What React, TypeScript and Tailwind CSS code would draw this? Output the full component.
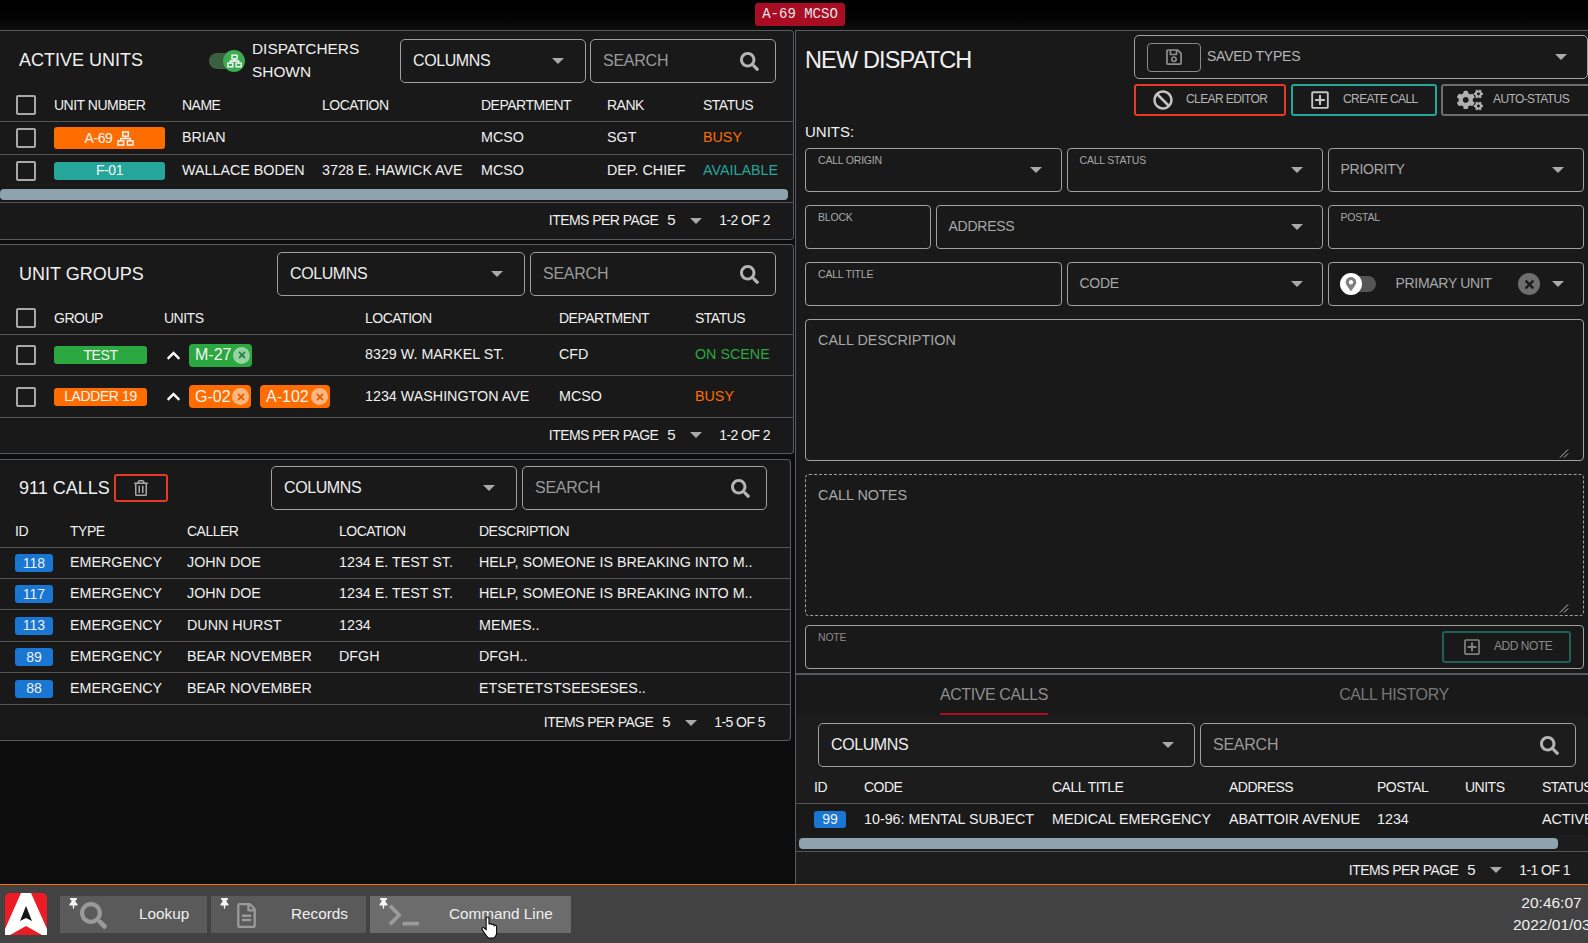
import React from "react";
import {
  FaSearch, FaRegTrashAlt, FaRegSave, FaBan, FaRegPlusSquare, FaCogs,
  FaMapMarkerAlt, FaThumbtack, FaRegFileAlt, FaTerminal, FaTimes, FaChevronUp,
} from "react-icons/fa";

function Arrow() {
  return <span className="block w-0 h-0 shrink-0 border-x-[6px] border-x-transparent border-t-[6px] border-t-[#aaaaaa]" />;
}

function Network({ w, h }: { w: number; h: number }) {
  return (
    <svg width={w} height={h} viewBox="0 0 18 16" fill="none" stroke="currentColor" strokeWidth="1.6" className="shrink-0">
      <rect x="6" y="1" width="6" height="4.5" />
      <rect x="1" y="10.5" width="6" height="4.5" />
      <rect x="11" y="10.5" width="6" height="4.5" />
      <path d="M9 5.5V8 M4 10.5V8H14V10.5" />
    </svg>
  );
}

function ColumnsBox({ w, pr = "pr-[21px]" }: { w: string; pr?: string }) {
  return (
    <div className={`${w} h-[44px] shrink-0 flex items-center justify-between border border-[#a0a0a0] rounded-[5px] pl-[12px] ${pr} text-[16px] tracking-[-0.4px] text-[#eeeeee]`}>
      <span>COLUMNS</span>
      <Arrow />
    </div>
  );
}

function SearchBox({ w }: { w: string }) {
  return (
    <div className={`${w} h-[44px] shrink-0 flex items-center justify-between border border-[#a0a0a0] rounded-[5px] pl-[12px] pr-[16px] text-[16px] tracking-[-0.25px] text-[#9a9a9a]`}>
      <span className="-mt-[1px]">SEARCH</span>
      <FaSearch size={19} className="text-[#b5b5b5]" />
    </div>
  );
}

function Check() {
  return <span className="block w-[20px] h-[20px] border-2 border-[#a8a8a8] rounded-[2px]" />;
}

function Pager({ range, pr }: { range: string; pr: string }) {
  return (
    <div className={`flex items-center justify-end text-[14px] tracking-[-0.55px] text-[#f0f0f0] ${pr}`}>
      <span>ITEMS PER PAGE</span>
      <span className="ml-[9px] text-[15px]">5</span>
      <span className="ml-[15px] mr-[17px]"><Arrow /></span>
      <span>{range}</span>
    </div>
  );
}

function Badge({ color, w, h, children }: { color: string; w: string; h: string; children: React.ReactNode }) {
  return (
    <span className={`${color} ${w} ${h} rounded-[3px] flex items-center justify-center gap-[5px] text-[14px] tracking-[-0.4px] text-[#f5f5f5]`}>
      {children}
    </span>
  );
}

function Chip({ label, color, x, w }: { label: string; color: string; x: string; w: string }) {
  return (
    <span className={`${color} ${w} h-[23px] rounded-[4px] flex items-center justify-between pl-[6px] pr-[2px] text-[16px] text-[#f5f5f5]`}>
      <span>{label}</span>
      <span className="w-[17px] h-[17px] rounded-full bg-[#ffffff80] flex items-center justify-center">
        <FaTimes size={10} className={x} />
      </span>
    </span>
  );
}

function Field({ label, big, arrow }: { label: string; big?: boolean; arrow?: boolean }) {
  return (
    <div className="h-[44px] flex items-center justify-between border border-[#a0a0a0] rounded-[4px] pl-[12px] pr-[19px] text-[#a8a8a8]">
      {big ? <span className="text-[14px] tracking-[-0.25px] -mt-[1px]">{label}</span> : <span className="self-start mt-[5px] text-[10.5px] tracking-[-0.2px] leading-[12px]">{label}</span>}
      {arrow && <Arrow />}
    </div>
  );
}

function ResizeHandle() {
  return (
    <svg width="10" height="10" viewBox="0 0 10 10" className="absolute right-[14px] bottom-[2px]">
      <path d="M1 9.5 L9 1.5 M5 9.5 L9 5.5" stroke="#bbbbbb" strokeWidth="1" />
    </svg>
  );
}

function Logo() {
  return (
    <svg width="42" height="42" viewBox="0 0 42 42" className="shrink-0 ml-[5px]">
      <rect width="42" height="42" rx="5" fill="#ed1c24" />
      <path d="M16 0 L26 0 L42 36 L42 42 L37 42 L21 33 L5 42 L0 42 L0 36 Z" fill="#ffffff" />
      <path d="M21 13 L27 28 L21 25 L15 28 Z" fill="#151515" />
    </svg>
  );
}

function TaskButton({ w, bg, iconW, icon, label }: { w: string; bg: string; iconW: string; icon: React.ReactNode; label: string }) {
  return (
    <div className={`${w} ${bg} h-[37px] flex items-center pl-[8px] shrink-0 text-[15.3px] text-[#f0f0f0]`}>
      <FaThumbtack size={11} className="self-start mt-[2px] text-[#f5f5f5] shrink-0" />
      <span className={`${iconW} flex items-center shrink-0 text-[#9a9a9a]`}>{icon}</span>
      <span>{label}</span>
    </div>
  );
}

const units = [
  { n: "A-69", name: "BRIAN", loc: "", dept: "MCSO", rank: "SGT", status: "BUSY", c: "text-[#ff6d00]" },
  { n: "F-01", name: "WALLACE BODEN", loc: "3728 E. HAWICK AVE", dept: "MCSO", rank: "DEP. CHIEF", status: "AVAILABLE", c: "text-[#26a69a]" },
];

const calls = [
  { id: "118", caller: "JOHN DOE", loc: "1234 E. TEST ST.", d: "HELP, SOMEONE IS BREAKING INTO M..", h: "h-[31px]" },
  { id: "117", caller: "JOHN DOE", loc: "1234 E. TEST ST.", d: "HELP, SOMEONE IS BREAKING INTO M..", h: "h-[31px]" },
  { id: "113", caller: "DUNN HURST", loc: "1234", d: "MEMES..", h: "h-[32px]" },
  { id: "89", caller: "BEAR NOVEMBER", loc: "DFGH", d: "DFGH..", h: "h-[31px]" },
  { id: "88", caller: "BEAR NOVEMBER", loc: "", d: "ETSETETSTSEESESES..", h: "h-[32px]" },
];

const panel = "bg-[#191919] border border-l-0 border-[#565b60] rounded-r-[4px] whitespace-nowrap";
const line = "border-b border-[#555555]";
const head = "text-[14px] tracking-[-0.5px]";
const unitCols = "grid grid-cols-[38px_128px_140px_159px_126px_1fr] items-center pl-[16px]";
const groupCols = "grid grid-cols-[38px_110px_201px_194px_1fr] items-center pl-[16px]";
const callCols = "grid grid-cols-[55px_117px_152px_140px_1fr] items-center pl-[15px]";
const activeCols = "grid grid-cols-[50px_188px_177px_148px_88px_77px_1fr] items-center pl-[18px]";

export default function App() {
  return (
    <div className="w-[1588px] h-[943px] overflow-hidden flex flex-col relative bg-[#0c0c0c] font-['Liberation_Sans',Arial,sans-serif] text-[#f0f0f0]">
      {/* top bar */}
      <div className="h-[30px] shrink-0 flex justify-center pt-[3px] bg-gradient-to-b from-[#000000] to-[#101010]">
        <span className="h-[23px] w-[90px] ml-[12px] rounded-[3px] bg-[#a90d24] flex items-center justify-center font-['Liberation_Mono',monospace] text-[14px] text-[#e4e4e4]">A-69 MCSO</span>
      </div>

      <div className="h-[854px] shrink-0 flex">
        {/* left column */}
        <div className="w-[795px] shrink-0">
          <section className={`${panel} w-[794px] h-[210px]`}>
            <div className="flex items-center pt-[8px]">
              <h2 className="w-[209px] shrink-0 pl-[19px] text-[18px] leading-[44px] -mt-[2px] font-normal">ACTIVE UNITS</h2>
              <div className="w-[43px] shrink-0 flex items-center relative h-[22px]">
                <span className="block w-[30px] h-[16px] rounded-full bg-[#3b5f41]" />
                <span className="absolute left-[14px] top-0 w-[22px] h-[22px] rounded-full bg-[#3dac52] flex items-center justify-center text-white">
                  <Network w={15} h={14} />
                </span>
              </div>
              <div className="w-[148px] shrink-0 whitespace-normal text-[15.4px] leading-[22.5px] -mt-[1px]">DISPATCHERS<br />SHOWN</div>
              <ColumnsBox w="w-[186px]" />
              <div className="w-[4px] shrink-0" />
              <SearchBox w="w-[186px]" />
            </div>
            <div className={`${unitCols} ${line} h-[39px] pt-[6px] ${head}`}>
              <Check />
              <span>UNIT NUMBER</span><span>NAME</span><span>LOCATION</span><span>DEPARTMENT</span>
              <span className="flex"><span className="w-[96px]">RANK</span><span>STATUS</span></span>
            </div>
            {units.map((u, i) => (
              <div key={u.n} className={`${unitCols} ${i === 0 ? `${line} h-[33px]` : "h-[31px]"} text-[14.3px]`}>
                <Check />
                {i === 0 ? (
                  <Badge color="bg-[#ff6d00]" w="w-[111px]" h="h-[22px]">{u.n} <Network w={17} h={15} /></Badge>
                ) : (
                  <Badge color="bg-[#26a69a]" w="w-[111px]" h="h-[18px]">{u.n}</Badge>
                )}
                <span>{u.name}</span><span>{u.loc}</span><span>{u.dept}</span>
                <span className="flex"><span className="w-[96px]">{u.rank}</span><span className={u.c}>{u.status}</span></span>
              </div>
            ))}
            <div className={`${line} h-[17px] pt-[3px]`}>
              <div className="w-[788px] h-[11px] rounded-[4px] bg-[#8fa3ae]" />
            </div>
            <div className="h-[35px] flex items-center justify-end"><Pager range="1-2 OF 2" pr="pr-[23px]" /></div>
          </section>

          <section className={`${panel} w-[794px] h-[210px] mt-[4px]`}>
            <div className="flex items-center pt-[7px]">
              <h2 className="w-[277px] shrink-0 pl-[19px] text-[18px] font-normal">UNIT GROUPS</h2>
              <ColumnsBox w="w-[248px]" />
              <div className="w-[5px] shrink-0" />
              <SearchBox w="w-[246px]" />
            </div>
            <div className={`${groupCols} ${line} h-[39px] pt-[6px] ${head}`}>
              <Check /><span>GROUP</span><span>UNITS</span><span>LOCATION</span>
              <span className="flex"><span className="w-[136px]">DEPARTMENT</span><span>STATUS</span></span>
            </div>
            <div className={`${groupCols} ${line} h-[41px] text-[14.3px]`}>
              <Check />
              <Badge color="bg-[#2ba840]" w="w-[93px]" h="h-[18px]">TEST</Badge>
              <div className="flex items-center">
                <span className="w-[25px] pl-[2px]"><FaChevronUp size={15} className="text-white" /></span>
                <Chip label="M-27" color="bg-[#2ba840]" x="text-[#2f7d45]" w="w-[63px]" />
              </div>
              <span>8329 W. MARKEL ST.</span>
              <span className="flex"><span className="w-[136px]">CFD</span><span className="text-[#2ba840]">ON SCENE</span></span>
            </div>
            <div className={`${groupCols} ${line} h-[42px] text-[14.3px]`}>
              <Check />
              <Badge color="bg-[#ff6d00]" w="w-[93px]" h="h-[18px]">LADDER 19</Badge>
              <div className="flex items-center">
                <span className="w-[25px] pl-[2px]"><FaChevronUp size={15} className="text-white" /></span>
                <Chip label="G-02" color="bg-[#ff6d00]" x="text-[#e06000]" w="w-[62px]" />
                <span className="w-[9px]" />
                <Chip label="A-102" color="bg-[#ff6d00]" x="text-[#e06000]" w="w-[70px]" />
              </div>
              <span>1234 WASHINGTON AVE</span>
              <span className="flex"><span className="w-[136px]">MCSO</span><span className="text-[#ff6d00]">BUSY</span></span>
            </div>
            <div className="h-[34px] flex items-center justify-end"><Pager range="1-2 OF 2" pr="pr-[23px]" /></div>
          </section>

          <section className={`${panel} w-[791px] h-[282px] mt-[5px]`}>
            <div className="flex items-center pt-[6px]">
              <h2 className="w-[114px] shrink-0 pl-[19px] text-[18px] font-normal">911 CALLS</h2>
              <div className="w-[54px] h-[28px] shrink-0 border-2 border-[#e53a25] rounded-[3px] flex items-center justify-center mr-[103px]">
                <FaRegTrashAlt size={16} className="text-[#a8a8a8]" />
              </div>
              <ColumnsBox w="w-[246px]" />
              <div className="w-[5px] shrink-0" />
              <SearchBox w="w-[245px]" />
            </div>
            <div className={`${callCols} ${line} h-[38px] pt-[6px] ${head}`}>
              <span>ID</span><span>TYPE</span><span>CALLER</span><span>LOCATION</span><span>DESCRIPTION</span>
            </div>
            {calls.map((c) => (
              <div key={c.id} className={`${callCols} ${line} ${c.h} text-[14.3px]`}>
                <span className="w-[38px] h-[18px] rounded-[3px] bg-[#1976d2] flex items-center justify-center text-[14px]">{c.id}</span>
                <span>EMERGENCY</span><span>{c.caller}</span><span>{c.loc}</span><span>{c.d}</span>
              </div>
            ))}
            <div className="h-[35px] flex items-center justify-end"><Pager range="1-5 OF 5" pr="pr-[25px]" /></div>
          </section>
        </div>

        {/* right column */}
        <div className="w-[793px] shrink-0 overflow-hidden bg-[#191919] border-l border-t border-[#565b60] whitespace-nowrap">
          <div className="flex pt-[4px] pl-[9px]">
            <h1 className="w-[329px] shrink-0 text-[23.5px] tracking-[-0.85px] font-normal leading-[50px]">NEW DISPATCH</h1>
            <div className="w-[454px] shrink-0">
              <div className="h-[44px] flex items-center border border-[#a0a0a0] rounded-[5px] pl-[12px] pr-[20px] text-[14px] tracking-[-0.25px] text-[#b5b5b5]">
                <span className="w-[54px] h-[29px] border border-[#8a8a8a] rounded-[4px] flex items-center justify-center">
                  <FaRegSave size={18} className="text-[#8f8f8f]" />
                </span>
                <span className="ml-[6px] flex-1 -mt-[2px]">SAVED TYPES</span>
                <Arrow />
              </div>
              <div className="flex mt-[5px] text-[12px] tracking-[-0.6px] text-[#b5b5b5]">
                <div className="w-[152px] h-[32px] border-2 border-[#e53a25] rounded-[3px] flex items-center pl-[17px] shrink-0">
                  <FaBan size={20} className="text-[#c4c4c4]" /><span className="ml-[13px] -mt-[2px]">CLEAR EDITOR</span>
                </div>
                <div className="w-[146px] h-[32px] ml-[5px] border-2 border-[#26a69a] rounded-[3px] flex items-center pl-[17px] shrink-0">
                  <FaRegPlusSquare size={20} className="text-[#c4c4c4]" /><span className="ml-[13px] -mt-[2px]">CREATE CALL</span>
                </div>
                <div className="w-[150px] h-[32px] ml-[4px] border-2 border-[#6e6e6e] rounded-[3px] flex items-center pl-[14px] shrink-0">
                  <FaCogs size={26} className="text-[#b0b0b0]" /><span className="ml-[10px] -mt-[2px]">AUTO-STATUS</span>
                </div>
              </div>
            </div>
          </div>

          <div className="pl-[9px] pr-[4px]">
            <div className="h-[32px] flex items-center text-[15px]">UNITS:</div>
            <div className="grid grid-cols-[256.5px_256px_1fr] gap-x-[5px]">
              <Field label="CALL ORIGIN" arrow />
              <Field label="CALL STATUS" arrow />
              <Field label="PRIORITY" big arrow />
            </div>
            <div className="grid grid-cols-[125.5px_1fr_256.5px] gap-x-[5px] mt-[13px]">
              <Field label="BLOCK" />
              <Field label="ADDRESS" big arrow />
              <Field label="POSTAL" />
            </div>
            <div className="grid grid-cols-[256.5px_256px_1fr] gap-x-[5px] mt-[13px]">
              <Field label="CALL TITLE" />
              <Field label="CODE" big arrow />
              <div className="h-[44px] flex items-center border border-[#a0a0a0] rounded-[4px] pl-[11px] pr-[19px] text-[14px] tracking-[-0.3px] text-[#a8a8a8]">
                <div className="w-[36px] h-[22px] relative flex items-center shrink-0">
                  <span className="block w-[36px] h-[16px] rounded-full bg-[#555555]" />
                  <span className="absolute left-0 top-0 w-[22px] h-[22px] rounded-full bg-white flex items-center justify-center">
                    <FaMapMarkerAlt size={14} className="text-[#808080]" />
                  </span>
                </div>
                <span className="ml-[20px] flex-1 -mt-[1px]">PRIMARY UNIT</span>
                <span className="w-[22px] h-[22px] rounded-full bg-[#6e6e6e] flex items-center justify-center mr-[12px]">
                  <FaTimes size={13} className="text-[#1c1c1c]" />
                </span>
                <Arrow />
              </div>
            </div>
            <div className="relative h-[142px] mt-[13px] border border-[#a0a0a0] rounded-[4px] pl-[12px] pt-[10px] text-[14.4px] text-[#a8a8a8]">
              CALL DESCRIPTION
              <ResizeHandle />
            </div>
            <div className="relative h-[142px] mt-[13px] border border-dashed border-[#a0a0a0] rounded-[4px] pl-[12px] pt-[4px] text-[14.4px] text-[#a8a8a8]">
              <div className="mt-[6px]">CALL NOTES</div>
              <ResizeHandle />
            </div>
            <div className="h-[44px] mt-[9px] flex justify-between items-center border border-[#a0a0a0] rounded-[4px] pl-[12px] pr-[12px] text-[#8a8a8a]">
              <span className="self-start mt-[5px] text-[10.5px] tracking-[-0.2px] leading-[12px]">NOTE</span>
              <div className="w-[129px] h-[32px] border-2 border-[#1f5f58] rounded-[3px] flex items-center pl-[19px] text-[12px] tracking-[-0.45px] text-[#8a8a8a]">
                <FaRegPlusSquare size={18} className="text-[#808080]" /><span className="ml-[13px] -mt-[2px]">ADD NOTE</span>
              </div>
            </div>
          </div>

          <div className="mt-[4px] border-t-2 border-[#565b60] h-[43px] grid grid-cols-2">
            <div className="flex justify-center"><span className="h-[40px] pt-[2px] flex items-center border-b-2 border-[#b00d24] text-[16px] tracking-[-0.4px] text-[#8e8e8e]">ACTIVE CALLS</span></div>
            <div className="flex justify-center pl-[8px]"><span className="h-[40px] flex items-center text-[16px] tracking-[-0.4px] text-[#777777]">CALL HISTORY</span></div>
          </div>

          <div className="bg-[#1c1c1c] h-[168px]">
            <div className="flex gap-[5px] pt-[7px] pl-[22px]">
              <ColumnsBox w="w-[377px]" pr="pr-[20px]" />
              <SearchBox w="w-[376px]" />
            </div>
            <div className={`${activeCols} ${line} h-[37px] pt-[5px] ${head}`}>
              <span>ID</span><span>CODE</span><span>CALL TITLE</span><span>ADDRESS</span><span>POSTAL</span><span>UNITS</span><span>STATUS</span>
            </div>
            <div className={`${activeCols} h-[31px] bg-[#191919] text-[14.3px]`}>
              <span className="w-[32px] h-[17px] rounded-[3px] bg-[#1976d2] flex items-center justify-center text-[14px]">99</span>
              <span>10-96: MENTAL SUBJECT</span><span>MEDICAL EMERGENCY</span><span>ABATTOIR AVENUE</span><span>1234</span><span></span><span>ACTIVE</span>
            </div>
            <div className={`${line} h-[17px] pt-[3px] pl-[3px]`}>
              <div className="w-[759px] h-[11px] rounded-[4px] bg-[#8fa3ae]" />
            </div>
            <div className="h-[32px] pt-[4px] flex items-center justify-end"><Pager range="1-1 OF 1" pr="pr-[18px]" /></div>
          </div>
        </div>
      </div>

      {/* taskbar */}
      <div className="flex-1 border-t border-[#ff6d00] bg-[#424242] flex items-center">
        <Logo />
        <div className="ml-[13px] flex gap-[4px]">
          <TaskButton w="w-[147px]" bg="bg-[#5a5a5a]" iconW="w-[60px]" icon={<FaSearch size={27} className="ml-[1px] mt-[2px]" />} label="Lookup" />
          <TaskButton w="w-[155px]" bg="bg-[#5a5a5a]" iconW="w-[61px]" icon={<FaRegFileAlt size={25} className="ml-[4px] mt-[2px]" />} label="Records" />
          <TaskButton w="w-[201px]" bg="bg-[#6c6c6c]" iconW="w-[60px]" icon={<FaTerminal size={30} className="mt-[2px]" />} label="Command Line" />
        </div>
        <div className="ml-auto -mr-[2px] w-[77px] text-center text-[15.5px] leading-[22.5px] text-[#f0f0f0] shrink-0">20:46:07<br />2022/01/03</div>
      </div>

      {/* mouse pointer */}
      <svg width="17" height="23" viewBox="0 0 16 22" className="absolute left-[481px] top-[916px]">
        <path d="M5 1.5c1-1 2.5-.5 2.5 1V8c.5-1 2.5-1 2.5.5c.5-1 2.5-.7 2.5.7c.6-.8 2.3-.4 2.3 1V16c0 2-1.5 4.5-3 5H7c-1-.5-2-2-3-3.5L1 13c-.8-1.2.8-2.6 2-1.5L4.8 13V2.5z" fill="#ffffff" stroke="#000000" strokeWidth="1" />
      </svg>
    </div>
  );
}
